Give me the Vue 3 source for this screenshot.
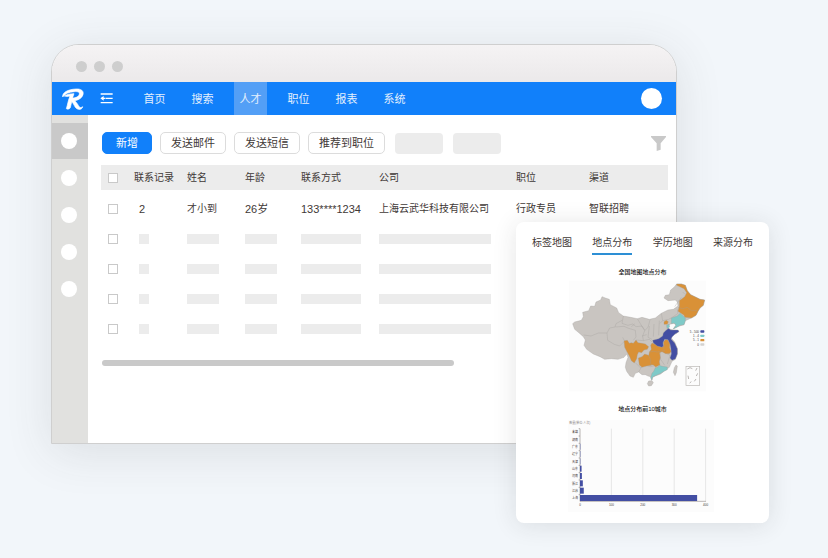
<script setup>
import { ref } from 'vue'

const navItems = ['首页', '搜索', '人才', '职位', '报表', '系统']
const activeNav = ref('人才')
const actions = ['发送邮件', '发送短信', '推荐到职位']
const shortcuts = ['候选人', '人才库', '面试', '报告', '设置']
const activeShortcut = ref('候选人')
const headers = ['联系记录', '姓名', '年龄', '联系方式', '公司', '职位', '渠道']
const tabs = ['标签地图', '地点分布', '学历地图', '来源分布']
const activeTab = ref('地点分布')
const bars = [
  { label: '未填', value: 0 },
  { label: '湖南', value: 0 },
  { label: '广东', value: 1 },
  { label: '辽宁', value: 1 },
  { label: '天津', value: 1 },
  { label: '山东', value: 5 },
  { label: '河南', value: 6 },
  { label: '浙江', value: 9 },
  { label: '江苏', value: 12 },
  { label: '上海', value: 373 },
]
const ticks = [0, 100, 200, 300, 400]
const legend = [
  { label: '5 - 500', color: '#434ea3' },
  { label: '1 - 4', color: '#7fcac8' },
  { label: '5 - 1', color: '#d99137' },
  { label: '0', color: '#d4d2d0' },
]
</script>

<template>
  <main class="stage">
    <section class="window">
      <div class="titlebar"><i></i><i></i><i></i></div>
      <header class="topnav">
        <svg class="logo" viewBox="0 0 72 66" aria-label="R">
          <path d="M5 27C3 14 20 4 45 3c16-1 24 6 21 17-3 10-13 16-25 18 6 5 10 13 15 20 4 2 7-1 9-2-1 6-6 9-13 8-11-2-13-18-23-27l4-7c13 0 21-5 22-12 1-6-6-8-15-7C23 12 12 17 5 27z" />
          <path d="M10 24c8-5 17-7 29-7-5 11-8 31-11 42-2 4-8 6-12 3 4-12 6-28 11-37-7 0-12 1-17-1z" />
        </svg>
        <button class="fold" aria-label="折叠菜单">
          <svg viewBox="0 0 39 33"><path d="M2 3h36M17 16h21M2 29h36" /><path class="tri" d="M1 16l10-7v14z M8 14h8v4H8z" /></svg>
        </button>
        <nav class="links">
          <a v-for="n in navItems" :key="n" href="#" :class="{ active: n === activeNav }" @click.prevent="activeNav = n">{{ n }}</a>
        </nav>
        <button class="avatar" aria-label="账户"></button>
      </header>
      <div class="body">
        <aside class="sidebar">
          <button v-for="s in shortcuts" :key="s" :aria-label="s" :class="{ active: s === activeShortcut }" @click="activeShortcut = s"><i></i></button>
        </aside>
        <div class="content">
          <div class="toolbar">
            <button class="btn primary">新增</button>
            <button v-for="a in actions" :key="a" class="btn">{{ a }}</button>
            <span class="ghost"></span>
            <span class="ghost"></span>
            <button class="filter" aria-label="筛选">
              <svg viewBox="0 0 45 45"><path d="M0 0h45v3L29 22v19l-12 4V22L0 3z" /></svg>
            </button>
          </div>
          <table>
            <colgroup><col class="c0" /><col class="c1" /><col class="c2" /><col class="c3" /><col class="c4" /><col class="c5" /><col class="c6" /><col /></colgroup>
            <thead>
              <tr>
                <th><input type="checkbox" aria-label="全选" /></th>
                <th v-for="h in headers" :key="h">{{ h }}</th>
              </tr>
            </thead>
            <tbody>
              <tr class="first">
                <td><input type="checkbox" aria-label="选择才小到" /></td>
                <td class="num inset">2</td>
                <td>才小到</td>
                <td class="num">26<span>岁</span></td>
                <td class="num">133****1234</td>
                <td>上海云武华科技有限公司</td>
                <td>行政专员</td>
                <td>智联招聘</td>
              </tr>
              <tr v-for="r in 4" :key="r">
                <td><input type="checkbox" aria-label="选择" /></td>
                <td class="inset"><i class="bone b1"></i></td>
                <td><i class="bone b2"></i></td>
                <td><i class="bone b2"></i></td>
                <td><i class="bone b3"></i></td>
                <td><i class="bone b4"></i></td>
                <td></td>
                <td></td>
              </tr>
            </tbody>
          </table>
          <div class="scroll"></div>
        </div>
      </div>
    </section>

    <section class="card">
      <div class="tabs">
        <button v-for="t in tabs" :key="t" :class="{ active: t === activeTab }" @click="activeTab = t">{{ t }}</button>
      </div>
      <h2>全国地图地点分布</h2>
      <svg class="map" viewBox="0 0 432 336">
        <rect x="3" y="2" width="411" height="332" fill="#fcfcfc" />
        <g stroke="#a19e9b" stroke-width="1" stroke-linejoin="round">
          <path fill="#c9c5c1" d="M14 131l6-5 20-5 6-11-2-13 18-5 6-14 12 1 4-13 14-6 4-10 10 4 12 4 3 16 19 10 6 14 14 10 22 4 20 4 14-4 22 6 18-4 18-14 20-10 16-2 14-10-2-12-6-6-22 2-12-8 4-8 12-2 4-14 10-8 8-10 14 0 12 4 6 16 10 12 16 8 12 6 14 2-4 16-10 8-6 10-6 12-14 8-18 8-4 12-20 6-12 6 8-10-6-6-10 2-8 6 0 8 16 4 16 2-6 8-12 6-6 6 12 14 8 20 0 16-6 16-10 6-8 18-14 10-12 10-16 6-8 4-2 8-4-10-8-2-8-4-10 0-10-8-10 4-6 12-10-4-10-14-4-12 2-14 6-16-4-10-8 10-18 6-20-2-20 2-14-8-20-8-20-14-8-12 4-16-6-10-16-14-10-8z" />
          <path fill="#c9c5c1" d="M242 303l10-1 4 6-6 9-8 1-4-7zM324 255l4 3-3 20-4 9-5-10 3-14z" />
          <g fill="none">
            <path d="M47 165l22 3 22-9 26 0 8-15 16-3 3-10 18-10M117 159l2 22 20 12 16 5 14-14M166 108l-4 22 18 6 14-4 10 8 18-2 8 12M142 141l26-2 14 6 20 6 2 20-8 10M208 116l12 20 10 16-6 16 2 14M230 152l10-10 6-22M244 138l-4 34 12 6M258 132l-2 38M274 122l-2 44M280 100l4 22-8 8M284 122l18-4M302 118l14-8 14-10-2-12M204 180l22 2 18-4 8 8M168 180l-4-8M202 248l16 16 10-10 20 6 16-4M220 262l-8 14M276 218l2 20 12 18M290 218l16 8-8 26M190 140l10-8M222 168l14-4M340 52l-20 28" />
          </g>
          <path fill="#d99137" d="M326 12l14 0 12 4 6 16 10 12 16 8 12 6 14 2-4 16-10 8-6 10-6 12-14 8-20-2-2-6-18-12 4-16 0-16 16-12 6-12-8-12-22-10z" />
          <path fill="none" d="M330 82l14 4 14-4 12 10 18 0M344 36l6 6" />
          <path fill="#7fcac8" d="M310 114l18-6 8-8 16 14 0 8-4 12-12 2-8 5-12 6 8-12-6-6-8 2zM296 136l7-3 2 8-8 5z" />
          <path fill="#d99137" d="M288 125l7-4 6 4-3 8-10 0z" />
          <g fill="#d99137">
            <path d="M168 182L178 181 184 190 190 188 196 190 204 180 210 188 222 190 232 192 242 200 238 208 228 210 221 218 212 216 208 224 206 236 199 249 190 242 184 228 176 214 170 202z" />
            <path d="M211 234L222 230 230 222 242 226 250 234 250 256 236 258 222 262 214 255z" />
            <path d="M244 216L250 208 248 196 252 189 262 193 272 199 284 201 287 196 286 186 292 179 299 179 306 190 305 204 310 214 304 221 293 221 282 215 275 218 277 233 274 245 276 255 263 261 256 255 248 254 248 238 242 228z" />
          </g>
          <path fill="none" d="M244 216l14-2 10 2 12-3 11-1M289 196l-3 10" />
          <path fill="#434ea3" d="M254 181L272 176 284 168 286 159 294 151 302 145 308 150 330 150 333 155 321 162 313 170 309 177 320 189 328 206 328 222 322 237 312 241 306 234 310 222 309 208 306 192 300 179 290 178 285 188 286 198 282 202 268 198 256 189z" />
          <path fill="#7fcac8" d="M256 276l6-13 8-1 3-6 10 3 15 2 0 8-10 5-12 7-14 6-8 4-3 10-3-8 4-14z" />
        </g>
        <rect x="354" y="259" width="41" height="57" fill="none" stroke="#b9b6b3" stroke-width="2" />
        <path d="M358 267l8-4 7 3M387 264l-4 8M389 280l-4 8M384 297l-5 7M365 309l5-4M360 287l2 10" fill="none" stroke="#99938f" stroke-width="2" />
        <g v-for="(l, i) in legend" :key="l.label">
          <rect x="397" :y="151 + i * 13" width="12" height="7" rx="2" :fill="l.color" />
          <text class="tiny" x="393" :y="158 + i * 13" text-anchor="end">{{ l.label }}</text>
        </g>
      </svg>
      <h2 class="second">地点分布前10城市</h2>
      <svg class="chart" viewBox="36 76 438 276">
        <rect x="36" y="76" width="438" height="276" fill="#fcfcfc" />
        <text class="tiny faint" x="40" y="89">数量(单位:人次)</text>
        <g v-for="t in ticks" :key="t">
          <path :d="`M${72 + t * 0.942} 102V320`" :stroke="t ? '#dddddd' : '#99938f'" stroke-width="2" />
          <text class="tiny" :x="72 + t * 0.942" y="334" text-anchor="middle">{{ t }}</text>
        </g>
        <path d="M72 320H450" stroke="#99938f" stroke-width="2" />
        <g v-for="(b, i) in bars" :key="b.label">
          <path :d="`M68 ${102 + i * 22}h4`" stroke="#99938f" stroke-width="2" />
          <text class="tiny" x="66" :y="116 + i * 22" text-anchor="end">{{ b.label }}</text>
          <rect x="72" :y="103 + i * 22" :width="b.value * 0.942" height="18" fill="#434ea3" />
        </g>
      </svg>
    </section>
  </main>
</template>

<style>
body {
  margin: 0;
  background: #f2f6fa;
}
</style>

<style scoped>
* {
  box-sizing: border-box;
}
.stage {
  position: relative;
  min-height: 100vh;
  padding: 44px 151px 35px 51px;
  font-family: "Liberation Sans", "Noto Sans CJK SC", sans-serif;
  font-size: 10px;
  color: #3f3937;
}
button {
  font: inherit;
  color: inherit;
  padding: 0;
  border: 0;
  background: none;
}
svg {
  display: block;
}
.window {
  border: 1px solid #cfcfcf;
  border-radius: 28px 28px 0 0;
  overflow: hidden;
  background: #fff;
  box-shadow: 0 8px 48px rgba(60, 60, 60, 0.12);
}
.titlebar {
  display: flex;
  align-items: center;
  gap: 7px;
  height: 37px;
  padding: 5px 24px 0;
  background: linear-gradient(#f5f3f4, #ebe9ea);
}
.titlebar i {
  width: 11px;
  height: 11px;
  border-radius: 50%;
  background: #cecece;
}
.topnav {
  display: flex;
  align-items: center;
  height: 33px;
  padding: 0 14px 0 9px;
  background: #1180fa;
}
.logo {
  width: 24px;
  height: 22px;
  fill: #fff;
  stroke: #fff;
  stroke-width: 2;
}
.fold {
  width: 13px;
  margin-left: 15px;
}
.fold svg {
  width: 13px;
  height: 11px;
  fill: none;
  stroke: #fff;
  stroke-width: 4;
}
.fold .tri {
  fill: #fff;
  stroke: none;
}
.links {
  display: flex;
  gap: 15px;
  margin-left: 25px;
  margin-right: auto;
}
.links a {
  width: 33px;
  height: 33px;
  line-height: 35px;
  text-align: center;
  font-size: 11px;
  color: #e3effd;
  text-decoration: none;
}
.links a.active {
  background: #539ff6;
}
.avatar {
  width: 21px;
  height: 21px;
  border-radius: 50%;
  background: #fff;
}
.body {
  display: flex;
}
.sidebar {
  display: flex;
  flex-direction: column;
  gap: 1px;
  flex: 0 0 36px;
  padding-top: 8px;
  background: #e1e1df;
}
.sidebar button {
  display: flex;
  align-items: center;
  height: 36px;
  padding-left: 9px;
}
.sidebar button.active {
  background: #c9c9c9;
}
.sidebar i {
  width: 16px;
  height: 16px;
  border-radius: 50%;
  background: #fff;
}
.content {
  flex: 1;
  min-width: 0;
  padding: 17px 8px 77px 13px;
}
.toolbar {
  display: flex;
  align-items: center;
  gap: 8px;
  height: 22px;
  margin-bottom: 11px;
  padding-left: 1px;
}
.btn {
  height: 22px;
  padding: 0 10px;
  border: 1px solid #dcdcdc;
  border-radius: 5px;
  font-size: 11px;
  line-height: 20px;
  background: #fff;
  white-space: nowrap;
}
.btn.primary {
  padding: 0 13px;
  border-color: #1180fa;
  background: #1180fa;
  color: #fff;
}
.ghost {
  width: 48px;
  height: 21px;
  margin-left: 2px;
  border-radius: 4px;
  background: #ececec;
}
.filter {
  margin-left: auto;
  margin-right: 2px;
}
.filter svg {
  width: 15px;
  height: 15px;
  fill: #c9c9c9;
}
table {
  width: 100%;
  border-collapse: collapse;
  table-layout: fixed;
}
.c0 { width: 33px; }
.c1 { width: 53px; }
.c2 { width: 58px; }
.c3 { width: 56px; }
.c4 { width: 78px; }
.c5 { width: 137px; }
.c6 { width: 73px; }
th,
td {
  height: 30px;
  padding: 0;
  text-align: left;
  font-weight: 400;
  line-height: 14px;
  white-space: nowrap;
}
th {
  height: 25px;
  background: #ececec;
}
.first td {
  height: 34px;
  padding-top: 4px;
}
th:first-child,
td:first-child {
  padding-left: 7px;
}
.num {
  font-size: 11px;
}
.inset {
  padding-left: 5px;
}
input {
  appearance: none;
  display: block;
  width: 10px;
  height: 10px;
  margin: 0;
  border: 1px solid #c9c9c9;
  background: #fff;
}
.bone {
  display: block;
  height: 10px;
  background: #ececec;
}
.b1 { width: 10px; }
.b2 { width: 32px; }
.b3 { width: 60px; }
.b4 { width: 112px; }
.scroll {
  width: 62%;
  height: 6px;
  margin-top: 16px;
  margin-left: 1px;
  border-radius: 3px;
  background: #c9c9c9;
}
.card {
  position: absolute;
  top: 222px;
  right: 59px;
  width: 253px;
  padding: 13px 16px 11px;
  border-radius: 8px;
  background: #fff;
  box-shadow: 0 2px 24px rgba(40, 40, 40, 0.12);
}
.tabs {
  display: flex;
  justify-content: space-between;
}
.tabs button {
  height: 20px;
  padding-bottom: 2px;
  border-bottom: 2px solid transparent;
  line-height: 16px;
}
.tabs button.active {
  border-color: #2d8fd5;
}
h2 {
  margin: 12px 0 3px;
  font-size: 6px;
  line-height: 10px;
  font-weight: 500;
  text-align: center;
  color: #111;
}
h2.second {
  margin-bottom: 6px;
}
.map,
.chart {
  margin-left: 36px;
}
.map {
  width: 144px;
  height: 112px;
}
.chart {
  width: 146px;
  height: 92px;
}
.tiny {
  font-size: 9px;
  fill: #3f3937;
}
.faint {
  fill: #8a8685;
}
</style>
